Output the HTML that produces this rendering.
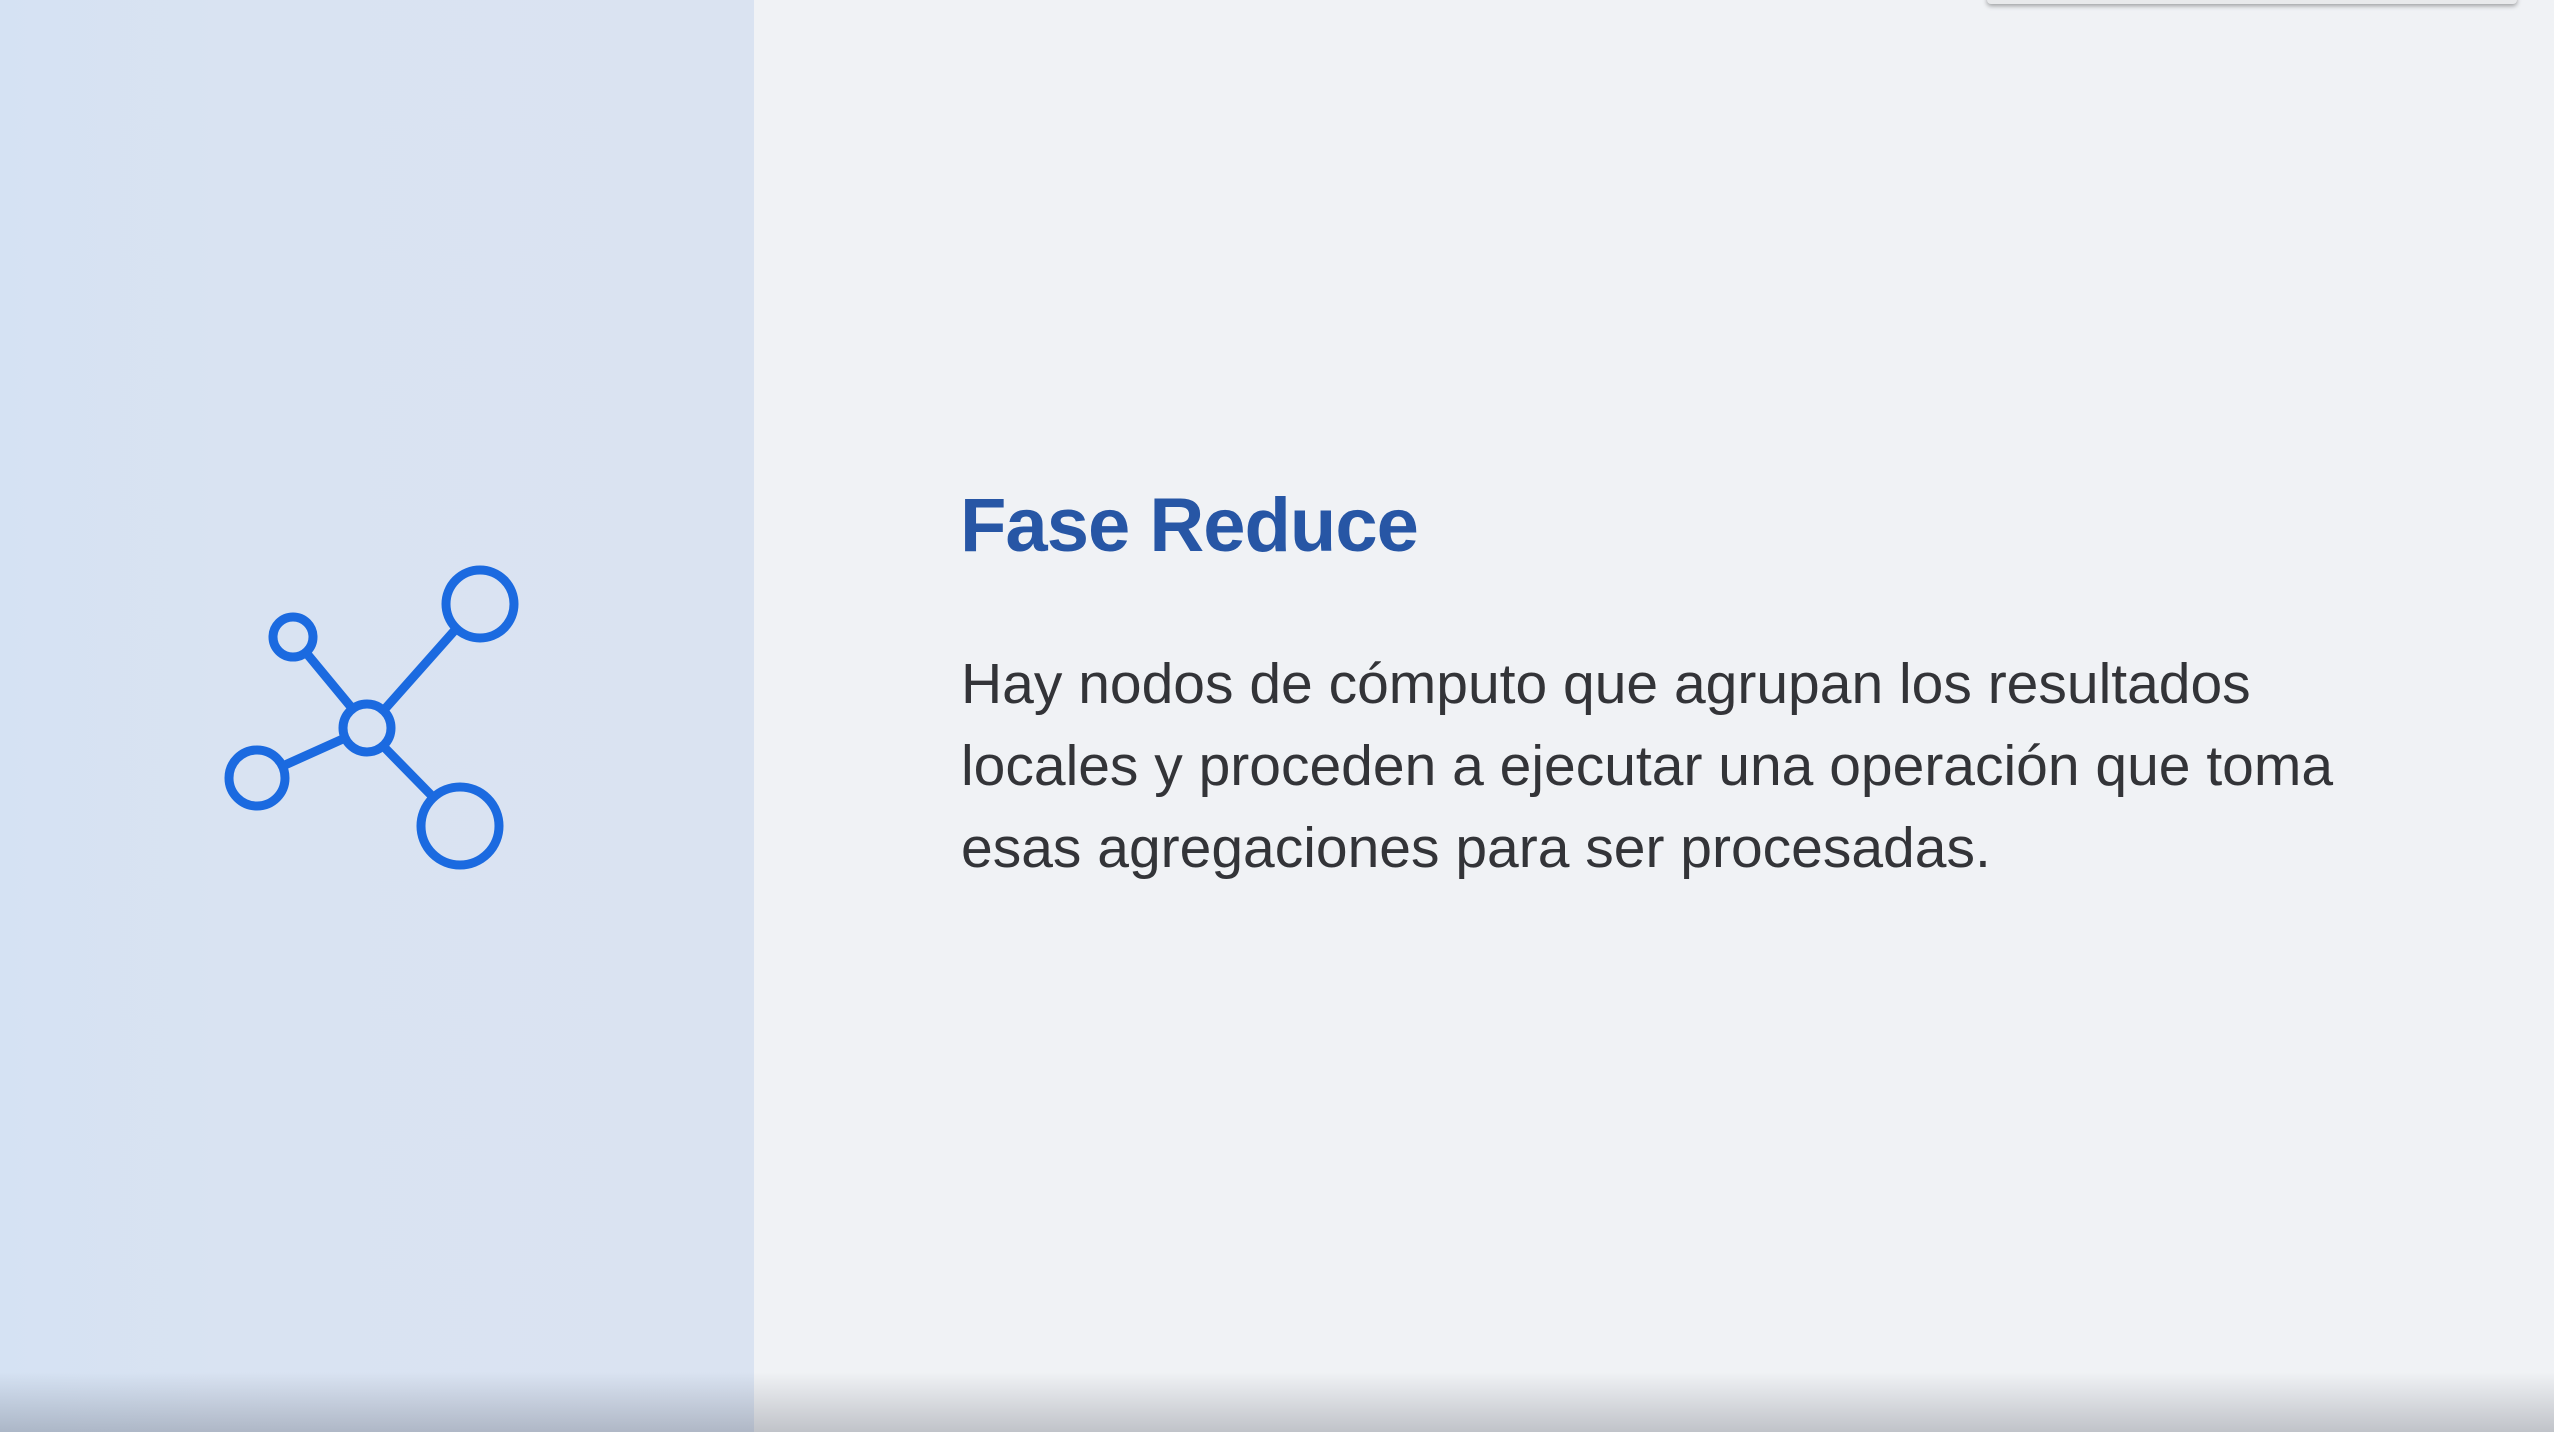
<!DOCTYPE html>
<html><head><meta charset="utf-8"><style>
html,body{margin:0;padding:0}
body{width:2554px;height:1432px;position:relative;overflow:hidden;background:#f0f2f5;font-family:"Liberation Sans",sans-serif}
.left{position:absolute;left:0;top:0;width:754px;height:1432px;background:linear-gradient(90deg,#d5e2f3,#d9e3f2 30%,#dae3f1)}
.shade{position:absolute;left:0;right:0;bottom:0;height:60px;background:linear-gradient(180deg,rgba(0,0,0,0),rgba(40,45,60,0.24))}
.bar{position:absolute;left:1987px;top:-6px;width:530px;height:10px;background:#e8e9eb;box-shadow:0 2px 5px rgba(0,0,0,0.35);border-radius:4px}
h1{position:absolute;left:960px;top:476px;margin:0;font-size:76px;font-weight:bold;color:#2756a5;line-height:100px;letter-spacing:-1px}
p{position:absolute;left:961px;top:643px;margin:0;font-size:57px;line-height:82px;color:#333438;width:1560px}
</style></head><body>
<div class="left"></div>
<div class="bar"></div>
<svg style="position:absolute;left:0;top:0" width="754" height="1000" viewBox="0 0 754 1000">
<g fill="none" stroke="#1b6ae0" stroke-width="9" stroke-linecap="round">
<line x1="308" y1="655" x2="351" y2="707"/>
<line x1="384" y1="710" x2="455" y2="630"/>
<line x1="285" y1="765" x2="345" y2="738"/>
<line x1="386" y1="749" x2="432" y2="796"/>
<circle cx="293" cy="637" r="20"/>
<circle cx="480" cy="604" r="34"/>
<circle cx="367" cy="728" r="24"/>
<circle cx="257" cy="778" r="28"/>
<circle cx="460" cy="826" r="39"/>
</g></svg>
<h1>Fase Reduce</h1>
<p>Hay nodos de cómputo que agrupan los resultados<br>locales y proceden a ejecutar una operación que toma<br>esas agregaciones para ser procesadas.</p>
<div class="shade"></div>
</body></html>
